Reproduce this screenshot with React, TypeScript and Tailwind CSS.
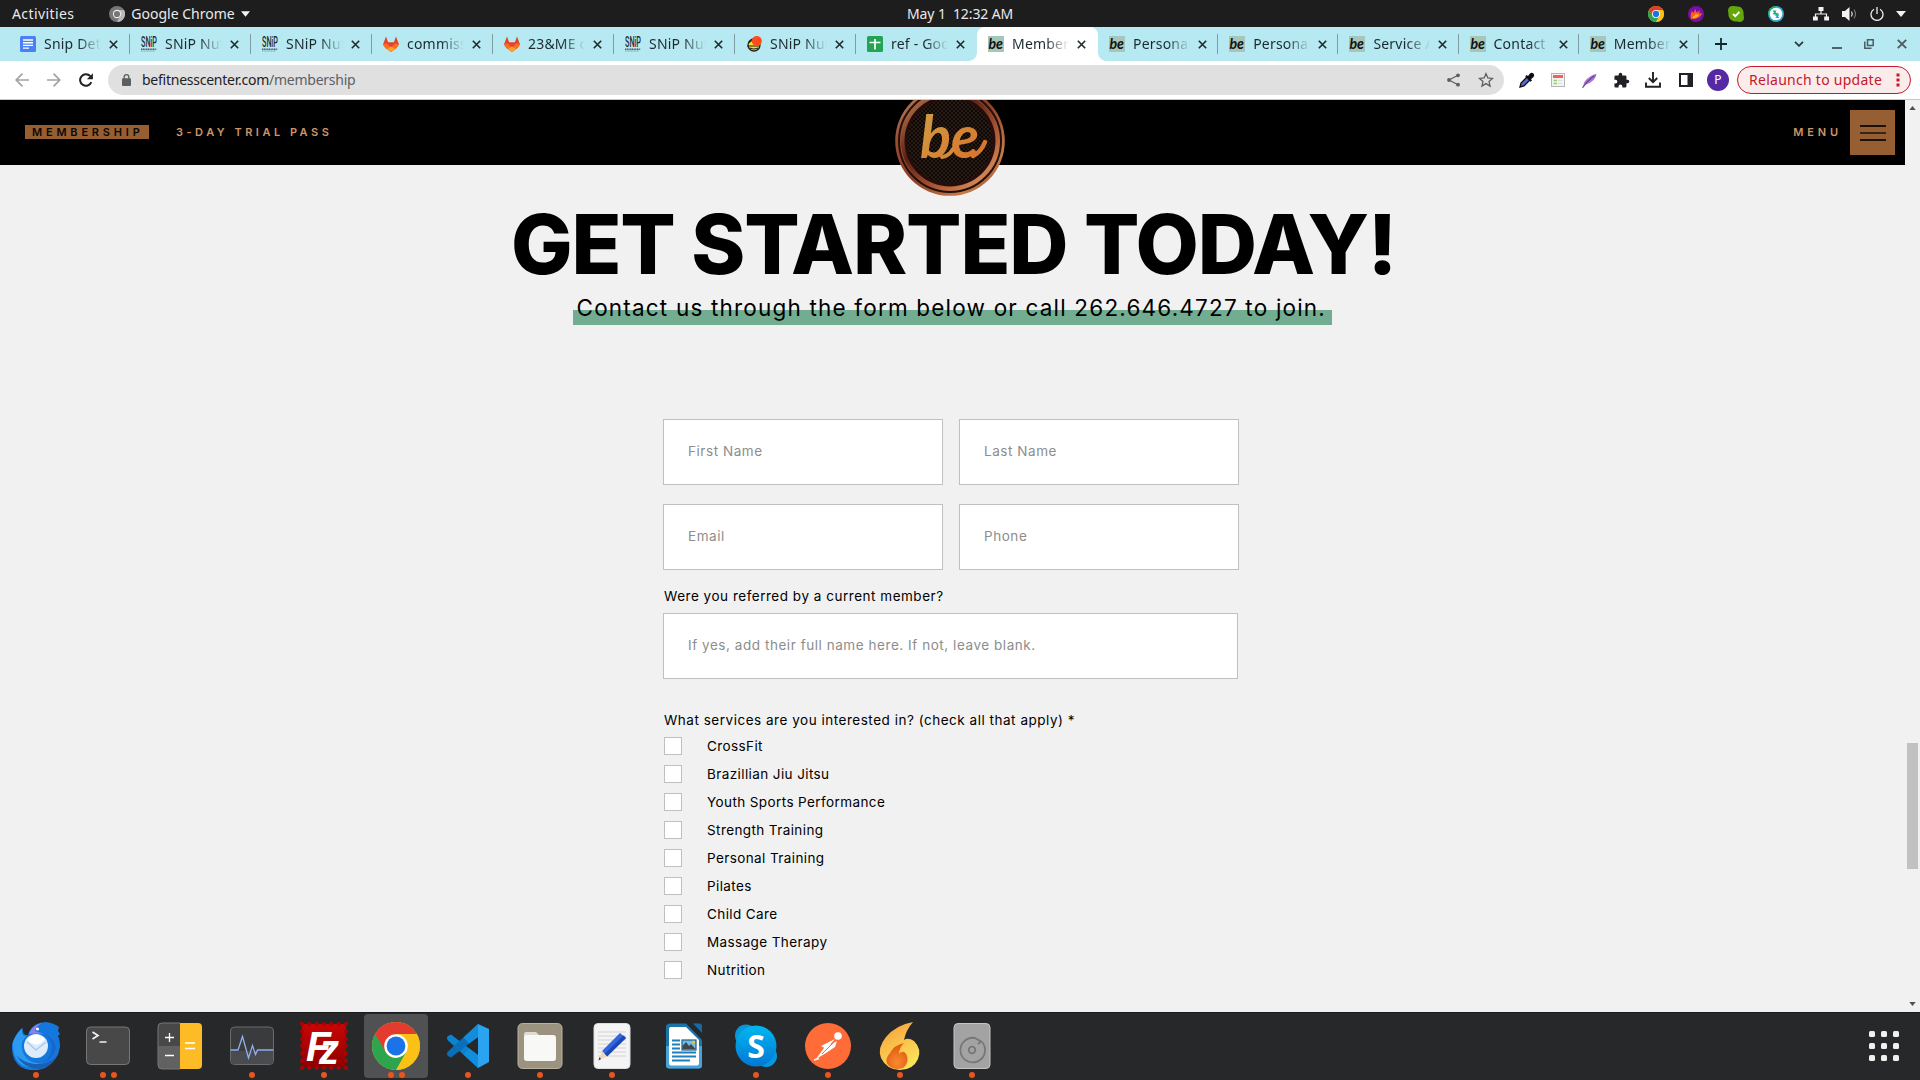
import React from "react";

/* ---------- shared logos ---------- */

function ChromeLogo({ className, id }: { className: string; id: string }) {
  return (
    <svg viewBox="0 0 48 48" className={className} preserveAspectRatio="none">
      <defs>
        <clipPath id={id}>
          <circle cx="24" cy="24" r="24" />
        </clipPath>
      </defs>
      <g clipPath={`url(#${id})`}>
        <rect width="48" height="48" fill="#fbc116" />
        <path d="M24 12H48V-2H0V8L13.6 30Z" fill="#e33b2e" />
        <path d="M3.2 12L13.6 30A12 12 0 0 0 24 36L34.4 30L24 48.5H-2V12Z" fill="#2da44e" />
        <path d="M24 12H48V48H24L34.4 30Z" fill="#fbc116" />
        <circle cx="24" cy="24" r="11.8" fill="#fff" />
        <circle cx="24" cy="24" r="9.4" fill="#1a73e8" />
      </g>
    </svg>
  );
}

/* ---------- GNOME top bar ---------- */

function TopBar() {
  return (
    <div className="relative flex h-[27px] items-center justify-between bg-[#1d1d1d] text-[14px] leading-none text-[#e9e9e9]">
      <div className="flex items-center pl-3">
        <span className="tracking-[0.4px]">Activities</span>
        <svg viewBox="0 0 16 16" className="ml-[35px] size-4">
          <circle cx="8" cy="8" r="8" fill="#777" />
          <path d="M8 4H15A8 8 0 0 1 8 16L11.4 10Z" fill="#b9b9b9" />
          <circle cx="8" cy="8" r="4.2" fill="#ececec" />
          <circle cx="8" cy="8" r="3.1" fill="#777" />
        </svg>
        <span className="ml-1.5">Google Chrome</span>
        <svg viewBox="0 0 10 6" className="ml-1.5 h-[6px] w-[9px]">
          <path d="M0 0H10L5 6Z" fill="#f2f2f2" />
        </svg>
      </div>
      <div className="absolute left-[907px] whitespace-pre tracking-[-0.1px]">May 1  12:32 AM</div>
      <div className="flex items-center pr-[14px]">
        <ChromeLogo className="size-4" id="tray-chrome" />
        <svg viewBox="0 0 16 16" className="ml-6 size-4">
          <circle cx="8" cy="8" r="8" fill="#7a0ea5" />
          <path d="M3 13C2 9 3 7 4 5L5.5 7L7.5 3L8.5 6.5L12 4.5L11 7.5L14 7C13 11 9 13.5 3 13Z" fill="#ff5a1f" />
          <path d="M4.5 12C5 10 7 10 8 7.5L9 9L11 8C10 11 8 12 4.5 12Z" fill="#ffc52e" />
        </svg>
        <svg viewBox="0 0 16 16" className="ml-6 size-4">
          <path d="M4.5 0C7 0 8 .6 10 .4C14 1 15.6 4 15.6 7.500C15.4 9 16 10 16 12C15.800 14.500 14 16 11.500 16C9.500 16 9 15.600 7.500 15.600C3 15.200 .4 12 .4 8C.6 6.500 0 6 0 4.500C0 2 2 0 4.500 0Z" fill="#64a70b" />
          <path d="M5 8L7.300 10.200L11.400 5.800" fill="none" stroke="#fff" strokeWidth="1.800" />
        </svg>
        <svg viewBox="0 0 16 16" className="ml-6 size-4">
          <circle cx="8" cy="8" r="8" fill="#2ba4d8" />
          <path d="M0 8A8 8 0 0 1 8 0V16Z" fill="#26ab63" />
          <circle cx="8" cy="8" r="6.300" fill="#fff" />
          <path d="M4.500 4.500H8.500L7.500 6.500L11.500 8L9 9.500L8 8.500L4.500 8L6 6.500Z" fill="#26ab63" />
          <path d="M11.500 12H7.500L8.500 10L5 8.500L8 8.500L11.500 9L10 10Z" fill="#2ba4d8" />
        </svg>
        <svg viewBox="0 0 16 14" className="ml-[29px] h-[14px] w-4">
          <path d="M8 3V7M2.500 10V7H13.500V10" fill="none" stroke="#f2f2f2" strokeWidth="1.200" />
          <path d="M5.500 0H10.500V4H5.500ZM0 9.500H4.800V13.500H0ZM11.200 9.500H16V13.500H11.200Z" fill="#f2f2f2" />
        </svg>
        <svg viewBox="0 0 15 14" className="ml-[13px] h-[14px] w-[15px]">
          <path d="M0 4H3L7.500 0V14L3 10H0Z" fill="#f2f2f2" />
          <path d="M9.500 4.500Q11 7 9.500 9.500" fill="none" stroke="#ddd" strokeWidth="1.300" />
          <path d="M12 2.500Q15 7 12 11.500" fill="none" stroke="#777" strokeWidth="1.200" />
        </svg>
        <svg viewBox="0 0 14 14" className="ml-[13px] size-[14px]">
          <path d="M4 2.200A6 6 0 1 0 10 2.200M7 0V7" fill="none" stroke="#eee" strokeWidth="1.300" />
        </svg>
        <svg viewBox="0 0 10 6" className="ml-[12px] h-[6px] w-[10px]">
          <path d="M0 0H10L5 6Z" fill="#f2f2f2" />
        </svg>
      </div>
    </div>
  );
}

/* ---------- browser tabs ---------- */

type Fav = "docs" | "snip" | "gitlab" | "ladybug" | "sheets" | "be";

function Favicon({ kind }: { kind: Fav }) {
  if (kind === "docs")
    return (
      <svg viewBox="0 0 16 16" className="size-4 shrink-0">
        <rect width="16" height="16" rx="1.500" fill="#4a80f5" />
        <path d="M3 4H13M3 6.700H13M3 9.400H13M3 12.100H9" stroke="#fff" strokeWidth="1.400" />
      </svg>
    );
  if (kind === "snip")
    return (
      <svg viewBox="0 0 16 16" className="size-4 shrink-0">
        <text x="0" y="10.500" fontSize="14" fontFamily="Roboto" fontWeight="500" textLength="16" lengthAdjust="spacingAndGlyphs" fill="#222f33">SNiP</text>
        <path d="M9.700 5V11" stroke="#e77b8f" strokeWidth="1" />
        <path d="M0 13.300H15.500" stroke="#465c61" strokeWidth="1.600" strokeDasharray="1.200 .5" />
        <path d="M0 15H14" stroke="#7e9a9f" strokeWidth="1" strokeDasharray="1 .5" />
      </svg>
    );
  if (kind === "gitlab")
    return (
      <svg viewBox="0 0 16 16" className="size-4 shrink-0">
        <path d="M3 0.600L5.100 6.200H10.900L13 0.600L16 8.500L13.500 12L8 16L2.500 12L0 8.500Z" fill="#e24329" />
        <path d="M0 8.500L3.500 7.200L8 11.500L12.500 7.200L16 8.500L13.500 12L8 16L2.500 12Z" fill="#fc6d26" />
        <path d="M4 13L8 10.500L12 13L8 16Z" fill="#fca326" />
      </svg>
    );
  if (kind === "ladybug")
    return (
      <svg viewBox="0 0 16 16" className="size-4 shrink-0">
        <circle cx="8" cy="9" r="6" fill="#f3df2d" stroke="#222" strokeWidth="1.300" />
        <path d="M1 10H13M3 7Q6 3 8 6M4 12Q8 14 12 12" stroke="#222" strokeWidth="1.200" fill="none" />
        <circle cx="10.800" cy="5" r="5" fill="#ff4b1f" />
      </svg>
    );
  if (kind === "sheets")
    return (
      <svg viewBox="0 0 16 16" className="size-4 shrink-0">
        <rect width="16" height="16" rx="1.500" fill="#23a455" />
        <path d="M2.500 6.500H13.500M8 3V13.500" stroke="#fff" strokeWidth="1.700" />
      </svg>
    );
  return (
    <svg viewBox="0 0 16 16" className="size-4 shrink-0">
      <rect width="16" height="16" fill="#a5c6b8" />
      <text x="0.500" y="13" fontSize="15.500" fontFamily="Lato" fontStyle="italic" fontWeight="700" textLength="14.500" lengthAdjust="spacingAndGlyphs" fill="#111">be</text>
    </svg>
  );
}

const tabs: { icon: Fav; title: string; active?: boolean; bare?: boolean }[] = [
  { icon: "docs", title: "Snip Deta" },
  { icon: "snip", title: "SNiP Nutr" },
  { icon: "snip", title: "SNiP Nutr" },
  { icon: "gitlab", title: "commissi" },
  { icon: "gitlab", title: "23&ME co" },
  { icon: "snip", title: "SNiP Nutr" },
  { icon: "ladybug", title: "SNiP Nutr" },
  { icon: "sheets", title: "ref - Goog", bare: true },
  { icon: "be", title: "Members", active: true, bare: true },
  { icon: "be", title: "Personal" },
  { icon: "be", title: "Personal" },
  { icon: "be", title: "Service A" },
  { icon: "be", title: "Contact U" },
  { icon: "be", title: "Members" },
];

function TabStrip() {
  return (
    <div className="flex h-[34px] items-stretch bg-[#b6e9f1] pl-[9px]">
      {tabs.map((t, i) => (
        <div
          key={i}
          className={
            t.active
              ? "relative flex w-[121px] shrink-0 items-center rounded-t-lg bg-white pl-[11px]"
              : i > 8
                ? "relative flex w-[120.200px] shrink-0 items-center pl-[11px]"
                : "relative flex w-[121px] shrink-0 items-center pl-[11px]"
          }
        >
          {t.active && (
            <>
              <span className="absolute bottom-0 -left-2 size-2 bg-[radial-gradient(circle_at_0_0,#b6e9f1_7.500px,#fff_8px)]" />
              <span className="absolute -right-2 bottom-0 size-2 bg-[radial-gradient(circle_at_100%_0,#b6e9f1_7.500px,#fff_8px)]" />
            </>
          )}
          <Favicon kind={t.icon} />
          <span className="ml-2 w-[57px] overflow-hidden text-[14px] leading-[20px] tracking-[0.200px] whitespace-nowrap text-[#1c2a2e] [mask-image:linear-gradient(to_right,#000_60%,transparent)]">
            {t.title}
          </span>
          <svg viewBox="0 0 9 9" className="ml-[8px] size-[9px]">
            <path d="M.8 .8L8.200 8.200M8.200 .8L.8 8.200" stroke="#20292c" strokeWidth="1.600" />
          </svg>
          {!t.bare && <span className="absolute right-0 h-[20px] w-px bg-[#7d9da3]" />}
        </div>
      ))}
      <div className="flex flex-1 items-center justify-end pr-3">
        <svg viewBox="0 0 12 12" className="size-3">
          <path d="M6 0V12M0 6H12" stroke="#15262a" strokeWidth="1.800" />
        </svg>
        <svg viewBox="0 0 10 6" className="ml-[67px] h-[6px] w-[10px]">
          <path d="M1 .8L5 4.800L9 .8" fill="none" stroke="#2b3b3f" strokeWidth="1.800" />
        </svg>
        <svg viewBox="0 0 10 10" className="ml-7 size-[10px]">
          <path d="M0 9H10" stroke="#526368" strokeWidth="2" />
        </svg>
        <svg viewBox="0 0 10 10" className="ml-[22px] size-[10px]">
          <path d="M3.500 .8H9.200V6.500H3.500Z" fill="none" stroke="#4d5c60" strokeWidth="1.500" />
          <path d="M.8 2.500V9.200H7.500" fill="none" stroke="#4d5c60" strokeWidth="1.500" />
        </svg>
        <svg viewBox="0 0 10 10" className="mr-[1px] ml-[23px] size-[10px]">
          <path d="M.8 .8L9.200 9.200M9.200 .8L.8 9.200" stroke="#4d5c60" strokeWidth="1.900" />
        </svg>
      </div>
    </div>
  );
}

/* ---------- browser toolbar ---------- */

function Toolbar() {
  return (
    <div className="flex h-[39px] items-center border-b border-[#c9c9cb] bg-white pr-[9px] pl-[15px] text-[14px] leading-none">
      <svg viewBox="0 0 14 14" className="size-[14px]">
        <path d="M14 7H1.500M7.500 .7L1.200 7L7.500 13.300" fill="none" stroke="#a2a2a4" strokeWidth="1.700" />
      </svg>
      <svg viewBox="0 0 14 14" className="ml-[18px] size-[14px]">
        <path d="M0 7H12.500M6.500 .7L12.800 7L6.500 13.300" fill="none" stroke="#a2a2a4" strokeWidth="1.700" />
      </svg>
      <svg viewBox="0 0 14 14" className="ml-[18px] size-[14px]">
        <path d="M12.300 9.200A5.800 5.800 0 1 1 11.300 3.200" fill="none" stroke="#1f2124" strokeWidth="2" />
        <path d="M13.900 .2V6.200H7.900Z" fill="#1f2124" />
      </svg>
      <div className="ml-[15px] flex h-[30px] w-[1396px] items-center rounded-full bg-[#e0e0e0] pr-[10px] pl-[14px]">
        <svg viewBox="0 0 9 12" className="h-[12px] w-[9px]">
          <rect y="4.300" width="9" height="7.700" rx="1" fill="#5b5e62" />
          <path d="M2.200 5V3A2.300 2.300 0 0 1 6.800 3V5" fill="none" stroke="#5b5e62" strokeWidth="1.300" />
        </svg>
        <span className="ml-[11px] tracking-[-0.250px] text-[#5c5f64]">
          <span className="text-[#1f2124]">befitnesscenter.com</span>/membership
        </span>
        <svg viewBox="0 0 13 14" className="ml-auto h-[14px] w-[13px]">
          <path d="M11 2.200L2 7L11 11.800" fill="none" stroke="#5b5e62" strokeWidth="1.200" />
          <circle cx="11" cy="2.300" r="1.900" fill="#5b5e62" />
          <circle cx="2" cy="7" r="1.900" fill="#5b5e62" />
          <circle cx="11" cy="11.700" r="1.900" fill="#5b5e62" />
        </svg>
        <svg viewBox="0 0 24 24" className="ml-[18px] size-[16px]">
          <path d="M12 2.500L14.800 9L21.800 9.600L16.500 14.200L18.100 21.200L12 17.400L5.900 21.200L7.500 14.200L2.200 9.600L9.200 9Z" fill="none" stroke="#5b5e62" strokeWidth="1.900" />
        </svg>
      </div>
      <svg viewBox="0 0 16 16" className="ml-[15px] size-[16px]">
        <path d="M1 15L2 11L8 5L11 8L5 14Z" fill="#5867d8" stroke="#111" strokeWidth="1.300" />
        <path d="M7.500 3L9 4L11 1.500Q12.500 0 14.500 1.500Q16 3 14.500 5L12 7.200L13 8.500L11.500 9.800L6.300 4.600Z" fill="#0b0b0b" />
      </svg>
      <svg viewBox="0 0 14 14" className="ml-[16px] size-[14px]">
        <rect x=".5" y=".5" width="13" height="13" fill="#f4f4f2" stroke="#b5b5b5" />
        <rect x="2" y="2" width="10" height="3" fill="#f4605a" />
        <path d="M2.500 7.500H6M2.500 10.500H6" stroke="#8bd36c" strokeWidth="1.300" />
        <path d="M7 7.500H11M7 10.500H11" stroke="#ddd" strokeWidth="1" />
      </svg>
      <svg viewBox="0 0 15 15" className="ml-[17px] size-[15px]">
        <path d="M1 13Q2 5 14.500 .5Q14 8 4 11.500Z" fill="#a679cf" />
        <path d="M.5 14.800Q5 8 12.500 2.500" stroke="#6d3a9c" strokeWidth="1.100" fill="none" />
      </svg>
      <svg viewBox="0 0 24 24" className="ml-[16px] size-[17px]">
        <path d="M20.500 11H19V7a2 2 0 0 0-2-2h-4V3.500a2.500 2.500 0 0 0-5 0V5H4a2 2 0 0 0-2 2v3.800h1.500a2.700 2.700 0 0 1 0 5.400H2V20a2 2 0 0 0 2 2h3.800v-1.500a2.700 2.700 0 0 1 5.400 0V22H17a2 2 0 0 0 2-2v-4h1.500a2.500 2.500 0 0 0 0-5Z" fill="#1f2124" />
      </svg>
      <svg viewBox="0 0 16 16" className="ml-[15px] size-[16px]">
        <path d="M8 0V10M3.800 6L8 10.200L12.200 6M1 10.500V14.800H15V10.500" fill="none" stroke="#1f2124" strokeWidth="1.900" />
      </svg>
      <svg viewBox="0 0 14 14" className="ml-[18px] size-[14px]">
        <rect x="1" y="1" width="12" height="12" fill="none" stroke="#1f2124" strokeWidth="2" />
        <rect x="8.500" width="5.500" height="14" fill="#1f2124" />
      </svg>
      <div className="ml-[14px] flex size-[22px] items-center justify-center rounded-full bg-[#5529a5] text-[12px] text-white">P</div>
      <div className="ml-auto flex h-[28px] w-[174px] items-center rounded-full border border-[#c5182c] bg-[#f9eceb] pl-[11px] text-[#c5182c]">
        <span className="tracking-[0.270px] whitespace-nowrap">Relaunch to update</span>
        <svg viewBox="0 0 4 14" className="ml-[14px] h-[14px] w-[4px]">
          <path d="M.5 .5H3.500V3.500H.5ZM.5 5.500H3.500V8.500H.5ZM.5 10.500H3.500V13.500H.5Z" fill="#c5182c" />
        </svg>
      </div>
    </div>
  );
}

/* ---------- website ---------- */

function BadgeLogo() {
  return (
    <svg viewBox="0 0 110 96" className="absolute top-0 left-[895px] h-[96px] w-[110px]">
      <defs>
        <linearGradient id="rim" x1="0" y1="0" x2="1" y2="1">
          <stop offset="0" stopColor="#c09a78" />
          <stop offset=".25" stopColor="#9a4d30" />
          <stop offset=".5" stopColor="#8a3c26" />
          <stop offset=".8" stopColor="#c87b4c" />
          <stop offset="1" stopColor="#6b2c1b" />
        </linearGradient>
        <linearGradient id="rim-inner" x1="0" y1="0" x2=".9" y2="1">
          <stop offset="0" stopColor="#c88a5c" />
          <stop offset=".4" stopColor="#5a2015" />
          <stop offset=".75" stopColor="#b5613a" />
          <stop offset="1" stopColor="#e0a06a" />
        </linearGradient>
        <linearGradient id="lettering" x1="0" y1="0" x2="1" y2="1">
          <stop offset="0" stopColor="#cfa046" />
          <stop offset="1" stopColor="#d9702a" />
        </linearGradient>
        <pattern id="mesh" width="4" height="4" patternUnits="userSpaceOnUse">
          <rect width="4" height="4" fill="#0c0807" />
          <circle cx="1" cy="1" r=".7" fill="#5f3f26" />
          <circle cx="3" cy="3" r=".7" fill="#5f3f26" />
        </pattern>
      </defs>
      <circle cx="55" cy="41" r="54.800" fill="url(#rim)" />
      <circle cx="55" cy="41" r="51" fill="none" stroke="#241009" strokeWidth="2" />
      <circle cx="55" cy="41" r="49" fill="url(#rim-inner)" />
      <circle cx="55" cy="41" r="45.500" fill="#260c0b" />
      <circle cx="55" cy="41" r="42.500" fill="url(#mesh)" />
      <text x="25" y="58" fontSize="59" fontFamily="Lato" fontStyle="italic" fontWeight="700" textLength="59" lengthAdjust="spacingAndGlyphs" fill="url(#lettering)">be</text>
      <path d="M78 56Q86 52 90 42" stroke="#d9772e" strokeWidth="4.500" strokeLinecap="round" fill="none" />
      <path d="M47 57Q54 56 58 49" stroke="#d08a38" strokeWidth="4" strokeLinecap="round" fill="none" />
    </svg>
  );
}

function SiteHeader() {
  return (
    <header className="relative flex h-[65px] items-center justify-between bg-black pr-[10px] pl-[25px] font-[Inter] text-[11px] leading-[14px] font-semibold text-[#cf9568]">
      <nav className="flex items-center pb-[2px]">
        <span className="h-[14px] w-[124px] bg-[#965f33] pl-[7px] tracking-[3.800px] whitespace-nowrap text-[#0d0704]">MEMBERSHIP</span>
        <span className="ml-[27px] tracking-[3.500px]">3-DAY TRIAL PASS</span>
      </nav>
      <BadgeLogo />
      <div className="flex items-center">
        <span className="pb-[2px] tracking-[3.900px]">MENU</span>
        <div className="ml-[8px] flex h-[45px] w-[45px] flex-col items-center justify-center gap-[5px] bg-[#965f33]">
          <span className="h-[2px] w-[26px] bg-[#1c1209]" />
          <span className="h-[2px] w-[26px] bg-[#3a2412]" />
          <span className="h-[2px] w-[26px] bg-[#1c1209]" />
        </div>
      </div>
    </header>
  );
}

const services = [
  "CrossFit",
  "Brazillian Jiu Jitsu",
  "Youth Sports Performance",
  "Strength Training",
  "Personal Training",
  "Pilates",
  "Child Care",
  "Massage Therapy",
  "Nutrition",
];

const field =
  "block h-[66px] border border-[#c0c0c0] bg-white px-6 pb-[2px] text-[13.500px] tracking-[0.550px] text-black outline-none placeholder:text-[#8d8d8d]";

function MembershipForm() {
  return (
    <main className="flex flex-1 flex-col items-center bg-[#f1f1f1] pr-[1px] font-[Inter] text-black">
      <h1 className="mt-[38px] ml-[3px] h-[85px] text-[82px] leading-[84px] font-extrabold tracking-[-1.200px] whitespace-nowrap">
        GET STARTED TODAY!
      </h1>
      <p className="mt-[3px] h-[34px] w-[759px] bg-[linear-gradient(to_bottom,transparent_19px,#72ad92_19px)] pl-[4px] text-[22.500px] leading-[34px] tracking-[1.190px] whitespace-nowrap">
        Contact us through the form below or call 262.646.4727 to join.
      </p>
      <form className="mt-[94px] mr-[2px] w-[576px] text-[13.500px] tracking-[0.520px]">
        <div className="grid grid-cols-[280px_280px] gap-x-4 gap-y-[19px]">
          <input className={field} placeholder="First Name" />
          <input className={field} placeholder="Last Name" />
          <input className={field} placeholder="Email" />
          <input className={field} placeholder="Phone" />
        </div>
        <label className="mt-[16px] block pl-px leading-[20px]">Were you referred by a current member?</label>
        <input className={field + " mt-[7px] w-[575px]"} placeholder="If yes, add their full name here. If not, leave blank." />
        <div className="mt-[31px] pl-px leading-[20px]">What services are you interested in? (check all that apply) *</div>
        <div className="mt-[2px] flex flex-col">
          {services.map((s) => (
            <label key={s} className="flex h-[28px] items-center pl-px">
              <input type="checkbox" className="size-[18px] appearance-none border border-[#c0c0c0] bg-white" />
              <span className="ml-[25px] pt-[1px] tracking-[0.400px]">{s}</span>
            </label>
          ))}
        </div>
      </form>
    </main>
  );
}

function Scrollbar() {
  return (
    <div className="flex w-[15px] shrink-0 flex-col items-center bg-[#f1f1f1]">
      <svg viewBox="0 0 8 5" className="mt-[6px] h-[4px] w-[7px]">
        <path d="M4 0L8 5H0Z" fill="#505050" />
      </svg>
      <div className="mt-[633px] h-[126px] w-[11px] bg-[#c1c1c1]" />
      <svg viewBox="0 0 8 5" className="mt-auto mb-[6px] h-[4px] w-[7px]">
        <path d="M0 0H8L4 5Z" fill="#505050" />
      </svg>
    </div>
  );
}

/* ---------- dock ---------- */

const dockIcons: { name: string; dots: number; active?: boolean; art: React.ReactNode }[] = [
  {
    name: "Thunderbird",
    dots: 1,
    art: (
      <svg viewBox="0 0 48 48" className="size-12">
        <path d="M11 6Q3 14 0 22Q-1 38 9 45Q20 51 33 46Q46 39 48 25Q48 18 46 14L48 12L46 9L47 5Q42 1 34 0Q22 0 17 10L16 13Q10 14 11 6Z" fill="#1377dd" />
        <path d="M1 20Q0 38 12 44Q30 50 42 37Q32 44 20 40Q8 34 10 20L14 14Q9 14 10 6Q3 13 1 20Z" fill="#2a9bf0" />
        <path d="M4 33Q12 47 28 47Q40 44 45 34Q36 43 22 42Q10 40 4 33Z" fill="#1b5fb4" />
        <path d="M17 12Q20 3 30 1Q24 4 23 9L32 12Q24 11 17 12Z" fill="#8c7ff0" />
        <path d="M33 13Q40 18 40 26Q39 35 32 40Q42 36 44 26Q43 16 33 13Z" fill="#1a66d0" />
        <circle cx="24" cy="24" r="12" fill="#dcecfb" />
        <path d="M15 17Q24 28 33 17Q24 8 15 17Z" fill="#fff" />
        <path d="M15 20L24 28L34 20" fill="none" stroke="#9fc7ee" strokeWidth="1.200" />
        <circle cx="25.500" cy="7" r="1.600" fill="#fff" />
      </svg>
    ),
  },
  {
    name: "Terminal",
    dots: 2,
    art: (
      <svg viewBox="0 0 48 48" className="size-12">
        <rect x="2.500" y="5" width="43" height="37.500" rx="4" fill="#484848" stroke="#777" />
        <path d="M8.500 10L14 13.500L8.500 17" fill="none" stroke="#f3f3f3" strokeWidth="1.700" />
        <path d="M15.500 20H22.500" stroke="#f3f3f3" strokeWidth="1.500" />
      </svg>
    ),
  },
  {
    name: "Calculator",
    dots: 0,
    art: (
      <svg viewBox="0 0 48 48" className="size-12">
        <path d="M24 1V24H2V5Q2 1 6 1Z" fill="#484848" />
        <path d="M24 47V24H2V43Q2 47 6 47Z" fill="#616161" />
        <path d="M24 1V47H42Q46 47 46 43V5Q46 1 42 1Z" fill="#fdbc25" />
        <path d="M24 1H6Q2 1 2 5V43Q2 47 6 47H24" fill="none" stroke="#777" />
        <path d="M9 15.500H18M13.500 11V20M9 33.500H18M29 21H39M29 26.500H39" stroke="#fff" strokeWidth="1.300" />
      </svg>
    ),
  },
  {
    name: "System Monitor",
    dots: 1,
    art: (
      <svg viewBox="0 0 48 48" className="size-12">
        <rect x="2.500" y="5" width="43" height="37.500" rx="4" fill="#3a3b3d" stroke="#6b6b6b" />
        <path d="M3 29H45V38Q45 42 41 42H7Q3 42 3 38Z" fill="#4a4b4e" />
        <path d="M2.500 28H10L14.500 14.500L20.500 36L24.500 23.500L27.500 32.500L29.500 28H45.500" fill="none" stroke="#91aef0" strokeWidth="1.300" />
      </svg>
    ),
  },
  {
    name: "FileZilla",
    dots: 1,
    art: (
      <svg viewBox="0 0 48 48" className="size-12">
        <defs>
          <linearGradient id="fz" x1="0" y1="0" x2="0" y2="1">
            <stop offset="0" stopColor="#c80505" />
            <stop offset="1" stopColor="#8d0000" />
          </linearGradient>
        </defs>
        <rect x="2" y="2" width="44" height="44" fill="url(#fz)" />
        <rect x="2" y="2" width="44" height="44" fill="none" stroke="#a80404" strokeWidth="4" strokeLinecap="round" strokeDasharray="0.100 7.230" />
        <g fill="#fff" fontFamily="Liberation Sans" fontStyle="italic" fontWeight="700">
          <text x="6" y="38.500" fontSize="43" textLength="25" lengthAdjust="spacingAndGlyphs">F</text>
          <text x="19" y="41.500" fontSize="42" textLength="20" lengthAdjust="spacingAndGlyphs">z</text>
        </g>
      </svg>
    ),
  },
  { name: "Chrome", dots: 2, active: true, art: <ChromeLogo className="size-12" id="dock-chrome" /> },
  {
    name: "VS Code",
    dots: 1,
    art: (
      <svg viewBox="0 0 48 48" className="size-12">
        <path d="M34 2L45 7V40L34 46Z" fill="#2aa4f0" />
        <path d="M34 46L4 18.500Q2 16 4 14L7 12.500L34 33Z" fill="#0b83cf" />
        <path d="M34 2L4 29.500Q2 32 4 34L7 35.500L34 15Z" fill="#0a6fb8" />
        <path d="M34 2L19.500 15.500L25 21.500L34 15ZM34 46L19.500 32.500L25 26.500L34 33Z" fill="#118ddc" />
      </svg>
    ),
  },
  {
    name: "Files",
    dots: 1,
    art: (
      <svg viewBox="0 0 48 48" className="size-12">
        <rect x="2" y="1.500" width="44" height="45" rx="4.500" fill="#9b9380" stroke="#b9b19c" />
        <path d="M8 38V12Q8 10 10 10H20L23 13H38V22Z" fill="#dedbd2" />
        <rect x="8" y="13" width="32" height="26" rx="3" fill="#f8f8f6" />
      </svg>
    ),
  },
  {
    name: "Text Editor",
    dots: 1,
    art: (
      <svg viewBox="0 0 48 48" className="size-12">
        <rect x="6" y="1.500" width="36" height="45" rx="4" fill="#f4f4f4" stroke="#ddd" />
        <path d="M10 10H38M10 14H38M10 18H38M10 22H38M10 26H38M10 30H38M10 34H38" stroke="#d2d2d2" />
        <path d="M32 11L38 16L19 34.500L14 29Z" fill="#3565df" />
        <path d="M35.500 13.500L38 16L19 34.500L16.500 32Z" fill="#1c48b5" />
        <path d="M14 29L19 34.500L11 38Z" fill="#f6d6b0" />
        <path d="M11.500 35L13 37L10.500 38.500Z" fill="#333" />
      </svg>
    ),
  },
  {
    name: "Writer",
    dots: 0,
    art: (
      <svg viewBox="0 0 48 48" className="size-12">
        <path d="M10 1.500H26L42 18V43Q42 46.500 39 46.500H9Q6 46.500 6 43V5Q6 1.500 10 1.500Z" fill="#1b73a8" />
        <path d="M6 24H42V43Q42 46.500 39 46.500H9Q6 46.500 6 43Z" fill="#48a3d6" />
        <path d="M33 1.500H40Q42 1.500 42 4V11Z" fill="#1a6a9f" />
        <path d="M11 5H26L39 18V41Q39 43.500 37 43.500H11Q9 43.500 9 41V7Q9 5 11 5Z" fill="#fff" />
        <path d="M12 18.500H20M12 22.500H20M12 26.500H20M12 30.500H36M12 34.500H36M12 38.500H30" stroke="#1d7fbc" strokeWidth="1.800" />
        <rect x="22" y="18" width="14" height="10" fill="#71bde7" stroke="#1a6090" strokeWidth="1.200" />
        <path d="M22.500 27V24L26 20L29 24L31 22L35.500 27Z" fill="#41484c" />
        <circle cx="33.500" cy="20" r="1.500" fill="#f7c22b" />
      </svg>
    ),
  },
  {
    name: "Skype",
    dots: 1,
    art: (
      <svg viewBox="0 0 48 48" className="size-12">
        <defs>
          <linearGradient id="sk" x1="0" y1="0" x2="0" y2="1">
            <stop offset="0" stopColor="#00b7f0" />
            <stop offset="1" stopColor="#0477d4" />
          </linearGradient>
        </defs>
        <circle cx="14" cy="13.500" r="11" fill="#0797d8" />
        <circle cx="34" cy="34" r="11" fill="#0797e0" />
        <circle cx="24" cy="24" r="20.500" fill="url(#sk)" />
        <text x="24" y="35.500" fontSize="32" fontFamily="Open Sans" fontWeight="700" textAnchor="middle" fill="#fff">S</text>
      </svg>
    ),
  },
  {
    name: "Postman",
    dots: 1,
    art: (
      <svg viewBox="0 0 48 48" className="size-12">
        <circle cx="24" cy="24" r="23" fill="#ff6c37" />
        <circle cx="34" cy="14" r="3.800" fill="#fff" />
        <path d="M31 17L17 24L22 27Z" fill="#fff" />
        <path d="M33 19L20 26L12 37L22 31L31 25Z" fill="#fff" />
        <path d="M30 20L18 32" stroke="#ff6c37" strokeWidth="1" />
        <path d="M10 38L15 36.500" stroke="#fff" strokeWidth="1.500" />
      </svg>
    ),
  },
  {
    name: "Burn",
    dots: 1,
    art: (
      <svg viewBox="0 0 48 48" className="size-12">
        <defs>
          <linearGradient id="flame" x1="0" y1="0" x2=".5" y2="1">
            <stop offset="0" stopColor="#f79a3a" />
            <stop offset="1" stopColor="#fbe25a" />
          </linearGradient>
          <radialGradient id="core" cx=".5" cy=".75" r=".6">
            <stop offset="0" stopColor="#f98a32" />
            <stop offset="1" stopColor="#e35f12" />
          </radialGradient>
        </defs>
        <path d="M37 0Q20 3 10 15Q1 26 5 36Q11 48 24 48Q37 48 42 37Q46 27 38 19Q32 15 28 18Q30 8 37 0Z" fill="url(#flame)" />
        <path d="M28 21Q18 23 14 31Q8 38 12 43Q18 49 27 46Q33 41 31 34Q29 29 26 30Q24 30 23 32Q23 26 28 21Z" fill="url(#core)" />
      </svg>
    ),
  },
  {
    name: "Disk",
    dots: 1,
    art: (
      <svg viewBox="0 0 48 48" className="size-12">
        <rect x="6" y="1.500" width="36" height="45" rx="4" fill="#a3a3a3" stroke="#c4c4c4" />
        <path d="M34 20A12.300 12.300 0 1 1 27 16L33 19.500L30 22" fill="none" stroke="#777" strokeWidth="1.800" />
        <circle cx="24" cy="28" r="3.300" fill="none" stroke="#777" strokeWidth="1.800" />
      </svg>
    ),
  },
];

function Dock() {
  return (
    <div className="flex h-[68px] items-stretch bg-[#27282a] shadow-[inset_0_1px_0_#1b1b1c]">
      {dockIcons.map((d) => (
        <div key={d.name} className="flex w-[72px] flex-col items-center pt-[2px]">
          <div
            className={
              d.active
                ? "flex h-[64px] w-[64px] flex-col items-center rounded bg-[#505153] pt-[7.500px]"
                : "flex h-[64px] w-[64px] flex-col items-center pt-[7.500px]"
            }
          >
            {d.art}
            <div className="mt-[2.500px] flex gap-[5px]">
              {Array.from({ length: d.dots }, (_, i) => (
                <span key={i} className="size-[6px] rounded-full bg-[#e95420]" />
              ))}
            </div>
          </div>
        </div>
      ))}
      <div className="mt-[19px] mr-[21px] ml-auto grid h-[30px] grid-cols-3 gap-[6px]">
        {Array.from({ length: 9 }, (_, i) => (
          <span key={i} className="size-[6px] rounded-[1.500px] bg-[#f0f0ee]" />
        ))}
      </div>
    </div>
  );
}

export default function App() {
  return (
    <div className="flex h-[1080px] w-[1920px] flex-col overflow-hidden bg-[#f1f1f1] font-['Noto_Sans',sans-serif]">
      <TopBar />
      <TabStrip />
      <Toolbar />
      <div className="flex h-[912px]">
        <div className="flex w-[1905px] flex-col">
          <SiteHeader />
          <MembershipForm />
        </div>
        <Scrollbar />
      </div>
      <Dock />
    </div>
  );
}
